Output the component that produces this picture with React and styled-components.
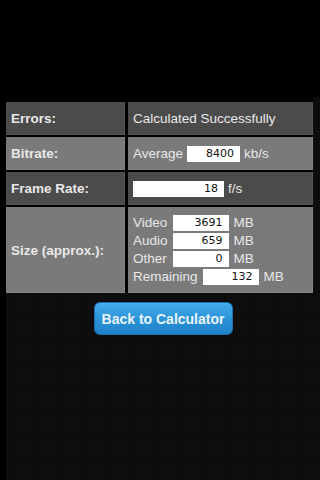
import React from "react";
import styled, { createGlobalStyle } from "styled-components";

const GlobalStyle = createGlobalStyle`
  html, body {
    margin: 0;
    padding: 0;
    background: #000;
    font-family: "Liberation Sans", Arial, sans-serif;
  }
`;

const Page = styled.div`
  width: 320px;
  height: 480px;
  background: #000;
  padding-top: 97px;
  box-sizing: border-box;
`;

const Panel = styled.div`
  margin-left: 6px;
  height: 383px;
  background-color: #0c0c0c;
  background-image: radial-gradient(rgba(255, 255, 255, 0.035) 1px, transparent 1px);
  background-size: 3px 3px;
  display: flex;
  flex-direction: column;
  align-items: center;
`;

const Table = styled.div`
  align-self: flex-start;
  display: grid;
  grid-template-columns: 119px 185px;
  grid-template-rows: 33px 33px 33px 86px;
  gap: 2px 3px;
  padding: 5px 0 0;
  background: #000;
`;

const Cell = styled.div`
  background: ${(p) => (p.$light ? "#7a7a7a" : "#4b4b4b")};
  box-shadow: inset -1px -1px 0 ${(p) => (p.$light ? "#858585" : "#555")};
  display: flex;
  align-items: center;
  color: #e8e8e8;
  font-size: 13.5px;
`;

const Label = styled(Cell)`
  font-weight: bold;
  padding-left: 5px;
`;

const Value = styled(Cell)`
  padding-left: 5px;
  gap: 4px;
`;

const SizeList = styled.div`
  display: grid;
  grid-template-columns: auto auto 1fr;
  align-items: center;
  row-gap: 2px;
  column-gap: 5px;
  line-height: 16px;
`;

const Field = styled.div`
  background: #fff;
  color: #111;
  font-family: "DejaVu Sans", sans-serif;
  font-size: 11px;
  text-align: right;
  height: 16px;
  line-height: 16px;
  padding-right: 6px;
  box-sizing: border-box;
  width: ${(p) => p.$w}px;
`;

const Unit = styled.span`
  color: #e8e8e8;
`;

const Row = styled.div`
  grid-column: 1 / -1;
  display: flex;
  align-items: center;
  gap: 5px;
`;

const Button = styled.button`
  margin-top: 9px;
  width: 139px;
  height: 33px;
  border: 1px solid #1c6fae;
  border-radius: 6px;
  background: linear-gradient(#44aeea, #2b93d8 50%, #1f82c9);
  color: #e9f4fb;
  font-family: "Liberation Sans", Arial, sans-serif;
  font-weight: bold;
  font-size: 14px;
  cursor: pointer;
`;

export default function App() {
  return (
    <>
      <GlobalStyle />
      <Page>
        <Panel>
          <Table>
            <Label>Errors:</Label>
            <Value>Calculated Successfully</Value>

            <Label $light>Bitrate:</Label>
            <Value $light>
              Average <Field $w={53}>8400</Field> <Unit>kb/s</Unit>
            </Value>

            <Label>Frame Rate:</Label>
            <Value>
              <Field $w={91}>18</Field> <Unit>f/s</Unit>
            </Value>

            <Label $light>Size (approx.):</Label>
            <Value $light>
              <SizeList>
                <span>Video</span>
                <Field $w={56}>3691</Field>
                <Unit>MB</Unit>
                <span>Audio</span>
                <Field $w={56}>659</Field>
                <Unit>MB</Unit>
                <span>Other</span>
                <Field $w={56}>0</Field>
                <Unit>MB</Unit>
                <Row>
                  <span>Remaining</span>
                  <Field $w={56}>132</Field>
                  <Unit>MB</Unit>
                </Row>
              </SizeList>
            </Value>
          </Table>
          <Button>Back to Calculator</Button>
        </Panel>
      </Page>
    </>
  );
}
